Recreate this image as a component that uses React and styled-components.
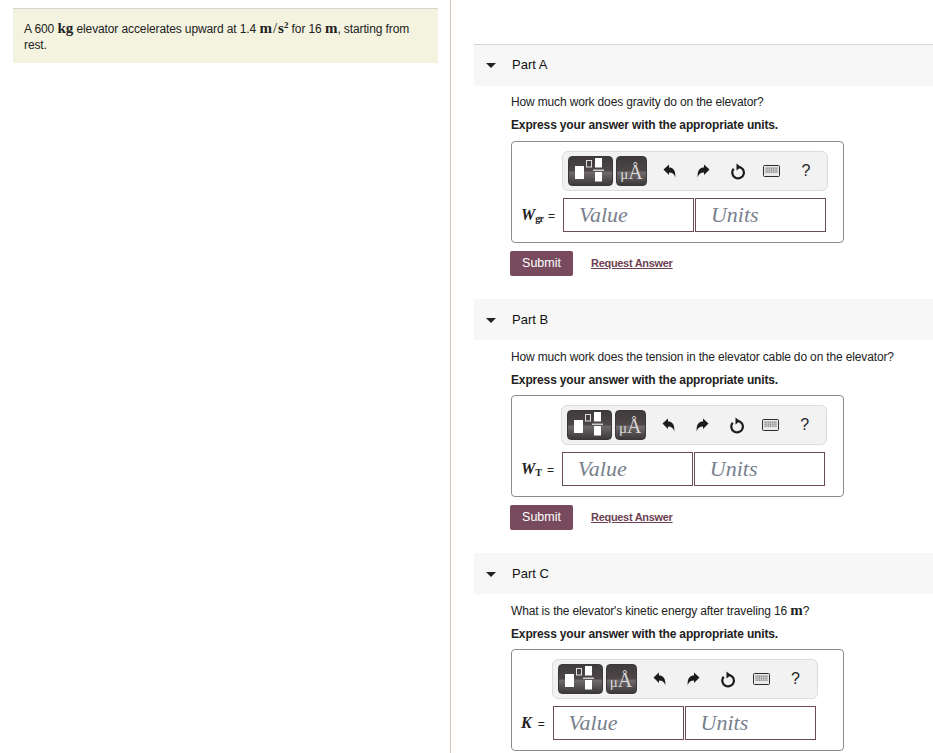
import React from "react";
import styled, { createGlobalStyle } from "styled-components";

const GlobalStyle = createGlobalStyle`
  html, body { margin: 0; padding: 0; background: #fff; }
  body {
    font-family: "Liberation Sans", Arial, sans-serif;
    font-size: 12px;
    letter-spacing: -0.15px;
    color: #222;
  }
`;

const Page = styled.div`
  display: flex;
  width: 933px;
  height: 753px;
  overflow: hidden;
`;

const LeftColumn = styled.aside`
  box-sizing: border-box;
  flex: 0 0 451px;
  height: 100%;
  padding: 8px 12px 0 13px;
  border-right: 1px solid #d8c8bc;
`;

const ProblemBox = styled.div`
  box-sizing: border-box;
  height: 55px;
  padding: 12px 11px 0;
  background: #f4f3e0;
  border-top: 1px solid #d5d5d0;
  letter-spacing: -0.11px;
  line-height: 16px;
`;

const MathText = styled.span`
  font-family: "Liberation Serif", serif;
  font-size: 15px;
  letter-spacing: 0;
  line-height: 0;
  font-weight: ${(p) => (p.$bold ? 700 : 400)};
`;

const Slash = styled(MathText)`
  padding: 0 1px;
`;

const Sup = styled.sup`
  font-size: 9px;
  line-height: 0;
  vertical-align: 5px;
`;

const RightColumn = styled.main`
  flex: 1;
  min-width: 0;
  padding: 44px 0 0 23px;
`;

const Part = styled.section`
  margin-bottom: 23px;
`;

const PartHeader = styled.header`
  box-sizing: border-box;
  display: flex;
  align-items: center;
  gap: 16px;
  height: ${(p) => (p.$first ? "42px" : "41px")};
  padding: 0 0 ${(p) => (p.$first ? "2px" : "0")} 12px;
  background: #f7f7f7;
  border-top: ${(p) => (p.$first ? "1px solid #d5d5d5" : "0")};
`;

const Caret = styled.span`
  width: 0;
  height: 0;
  margin-top: 2px;
  border-left: 5px solid transparent;
  border-right: 5px solid transparent;
  border-top: 5px solid #222;
`;

const PartTitle = styled.h2`
  margin: 0;
  font-size: 13px;
  font-weight: 400;
  letter-spacing: 0;
  color: #111;
`;

const PartBody = styled.div`
  padding: ${(p) => (p.$first ? "8px" : "9px")} 0 0 37px;
`;

const Question = styled.p`
  margin: 0 0 7px;
  line-height: 16px;
`;

const Instruction = styled.p`
  margin: 0 0 ${(p) => (p.$first ? "8px" : "7px")};
  line-height: 16px;
  font-weight: 700;
`;

const AnswerBox = styled.div`
  box-sizing: border-box;
  display: grid;
  grid-template-columns: auto auto;
  justify-content: start;
  align-content: start;
  row-gap: 7px;
  column-gap: 8px;
  width: 333px;
  height: 102px;
  padding: 9px 0 0 9px;
  border: 1px solid #8c8c8c;
  border-radius: 4px;
`;

const Toolbar = styled.div`
  grid-column: 2;
  box-sizing: border-box;
  display: flex;
  align-items: center;
  width: 266px;
  height: 40px;
  margin-left: -1px;
  padding-left: 5px;
  background: #f2f2f2;
  border: 1px solid #dcdcdc;
  border-radius: 6px;
`;

const TemplateButton = styled.div`
  box-sizing: border-box;
  display: flex;
  align-items: baseline;
  justify-content: center;
  flex: none;
  overflow: hidden;
  width: ${(p) => p.$width}px;
  height: 30px;
  margin-right: 3px;
  border-radius: 4px;
  border: 1px solid #3a3839;
  background: linear-gradient(#3f3a3b 0, #4d4748 50%, #706a6b 54%, #3c393a 100%);
  color: #d8d7d7;
  font-family: "Liberation Serif", serif;
  letter-spacing: 0;
`;

const TemplatesSvg = styled.svg`
  align-self: center;
  display: block;
`;

const Micro = styled.span`
  font-size: 15px;
  line-height: 31px;
`;

const Angstrom = styled.span`
  font-size: 20px;
  line-height: 31px;
`;

const ToolGroup = styled.div`
  display: flex;
  margin-left: 3px;
`;

const ToolIcon = styled.div`
  flex: none;
  display: flex;
  align-items: center;
  justify-content: center;
  width: 34px;
  height: 30px;
  color: #222;
  font-size: 16px;
  letter-spacing: 0;
`;

const VarLabel = styled.div`
  display: flex;
  align-items: baseline;
  align-self: center;
  white-space: nowrap;
  font-size: 12px;
`;

const VarName = styled.span`
  font-family: "Liberation Serif", serif;
  font-size: 16px;
  font-weight: 700;
  font-style: italic;
  letter-spacing: 0;
`;

const VarSub = styled.span`
  font-family: "Liberation Serif", serif;
  font-size: 10px;
  font-weight: 700;
  letter-spacing: ${(p) => (p.$tight ? "-0.8px" : "0")};
  position: relative;
  top: 2px;
`;

const Equals = styled.span`
  margin-left: ${(p) => (p.$wide ? "6px" : "5px")};
`;

const Inputs = styled.div`
  display: flex;
  gap: 1px;
`;

const Field = styled.div`
  box-sizing: border-box;
  width: 131px;
  height: 34px;
  padding-left: 15px;
  border: 1px solid #6b4a5a;
  font-family: "Liberation Serif", serif;
  font-style: italic;
  font-size: 22px;
  letter-spacing: 0;
  line-height: 31px;
  color: #77808c;
`;

const Actions = styled.div`
  display: flex;
  align-items: center;
  gap: 18px;
  margin: 8px 0 0 -1px;
`;

const SubmitButton = styled.div`
  box-sizing: border-box;
  width: 63px;
  height: 25px;
  background: #784a5e;
  border-radius: 2px;
  color: #fff;
  font-size: 12.5px;
  text-align: center;
  letter-spacing: 0;
  line-height: 24px;
`;

const RequestLink = styled.a`
  font-size: 11px;
  font-weight: 700;
  letter-spacing: -0.3px;
  color: #6e3f52;
  text-decoration: underline;
  margin-top: -1px;
`;

function TemplatesIcon() {
  return (
    <TemplatesSvg width="43" height="28" viewBox="0 0 43 28" fill="#fff">
      <rect x="6" y="9" width="9" height="13" />
      <rect x="17.500" y="3.500" width="5" height="6.500" fill="none" stroke="#ddd" />
      <rect x="26" y="1" width="7" height="9.500" />
      <rect x="24" y="12.500" width="11" height="1.500" fill="#ccc" />
      <rect x="26" y="15" width="7" height="9.500" />
    </TemplatesSvg>
  );
}

function Arrow({ flip }) {
  return (
    <svg width="13" height="14" viewBox="0 0 13 14" style={flip ? { transform: "scaleX(-1)" } : undefined}>
      <path d="M0.500 5.500 6 0.500v3C10 3.500 12.800 6 12.300 13.500 11.500 10 9.500 8.500 6 8.500v2.500z" fill="#1c1c1c" />
    </svg>
  );
}

function ResetIcon() {
  return (
    <svg width="16" height="17" viewBox="0 0 16 17">
      <path d="M8 3.800a5.800 5.800 0 1 1-4.300 2" fill="none" stroke="#1c1c1c" strokeWidth="2.200" />
      <path d="M6.500 0.500v7L11 4z" fill="#1c1c1c" />
    </svg>
  );
}

function KeyboardIcon() {
  const keys = [];
  for (let r = 0; r < 3; r++) {
    for (let c = 0; c < 7; c++) {
      keys.push(<rect key={r + "-" + c} x={2.500 + c * 1.800} y={2.500 + r * 2} width="1.200" height="1.200" fill="#666" />);
    }
  }
  return (
    <svg width="17" height="12" viewBox="0 0 17 12">
      <rect x="0.500" y="0.500" width="16" height="11" rx="1" fill="#eaeaea" stroke="#2c2c2c" />
      {keys}
    </svg>
  );
}

function AnswerWidget({ label, wideEquals }) {
  return (
    <AnswerBox>
      <Toolbar>
        <TemplateButton $width={45}>
          <TemplatesIcon />
        </TemplateButton>
        <TemplateButton $width={31}>
          <Micro>μ</Micro>
          <Angstrom>Å</Angstrom>
        </TemplateButton>
        <ToolGroup>
          <ToolIcon><Arrow /></ToolIcon>
          <ToolIcon><Arrow flip /></ToolIcon>
          <ToolIcon><ResetIcon /></ToolIcon>
          <ToolIcon><KeyboardIcon /></ToolIcon>
          <ToolIcon>?</ToolIcon>
        </ToolGroup>
      </Toolbar>
      <VarLabel>
        {label}
        <Equals $wide={wideEquals}>=</Equals>
      </VarLabel>
      <Inputs>
        <Field>Value</Field>
        <Field>Units</Field>
      </Inputs>
    </AnswerBox>
  );
}

const parts = [
  {
    title: "Part A",
    question: "How much work does gravity do on the elevator?",
    label: <><VarName>W</VarName><VarSub $tight>gr</VarSub></>,
  },
  {
    title: "Part B",
    question: "How much work does the tension in the elevator cable do on the elevator?",
    label: <><VarName>W</VarName><VarSub>T</VarSub></>,
  },
  {
    title: "Part C",
    question: <>What is the elevator's kinetic energy after traveling 16 <MathText $bold>m</MathText>?</>,
    label: <VarName>K</VarName>,
    wideEquals: true,
    noActions: true,
  },
];

export default function App() {
  return (
    <Page>
      <GlobalStyle />
      <LeftColumn>
        <ProblemBox>
          A 600 <MathText $bold>kg</MathText> elevator accelerates upward at 1.4 <MathText $bold>m</MathText>
          <Slash>/</Slash><MathText $bold>s<Sup>2</Sup></MathText> for 16 <MathText $bold>m</MathText>, starting from rest.
        </ProblemBox>
      </LeftColumn>
      <RightColumn>
        {parts.map((part, i) => (
          <Part key={part.title}>
            <PartHeader $first={i === 0}>
              <Caret />
              <PartTitle>{part.title}</PartTitle>
            </PartHeader>
            <PartBody $first={i === 0}>
              <Question>{part.question}</Question>
              <Instruction $first={i === 0}>Express your answer with the appropriate units.</Instruction>
              <AnswerWidget label={part.label} wideEquals={part.wideEquals} />
              {!part.noActions && (
                <Actions>
                  <SubmitButton>Submit</SubmitButton>
                  <RequestLink>Request Answer</RequestLink>
                </Actions>
              )}
            </PartBody>
          </Part>
        ))}
      </RightColumn>
    </Page>
  );
}
